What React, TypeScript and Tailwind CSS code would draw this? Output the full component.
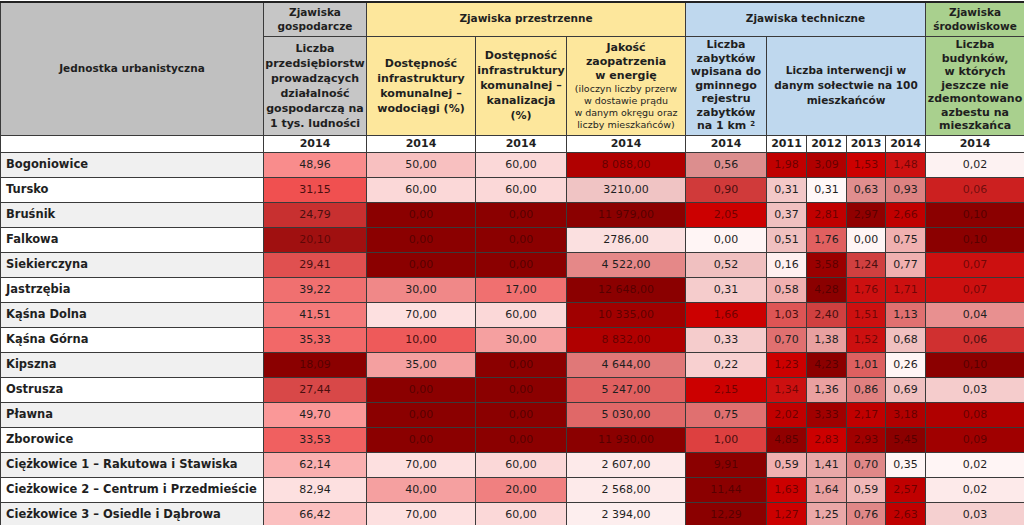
import React from 'react';

type Row = { name: string; cells: [string, string][] };

// heat-map colours read off the screenshot, cell by cell
const rows: Row[] = [
  { name: 'Bogoniowice', cells: [['48,96', '#f98c8c'], ['50,00', '#f8c0c0'], ['60,00', '#fbd8d8'], ['8 088,00', '#b00000'], ['0,56', '#dc8e8e'], ['1,98', '#c00000'], ['3,09', '#b00000'], ['1,53', '#cc0000'], ['1,48', '#cc1010'], ['0,02', '#fdf2f2']] },
  { name: 'Tursko', cells: [['31,15', '#f05050'], ['60,00', '#fbd8d8'], ['60,00', '#fbd8d8'], ['3210,00', '#f0c4c4'], ['0,90', '#d03a3a'], ['0,31', '#f3c8c8'], ['0,31', '#fff8f8'], ['0,63', '#e08e8e'], ['0,93', '#dc8282'], ['0,06', '#cc2020']] },
  { name: 'Bruśnik', cells: [['24,79', '#c83030'], ['0,00', '#8b0000'], ['0,00', '#8b0000'], ['11 979,00', '#8b0000'], ['2,05', '#cc0000'], ['0,37', '#f0c0c0'], ['2,81', '#c00000'], ['2,97', '#900000'], ['2,66', '#c00000'], ['0,10', '#8b0000']] },
  { name: 'Falkowa', cells: [['20,10', '#a01010'], ['0,00', '#8b0000'], ['0,00', '#8b0000'], ['2786,00', '#fbe0e0'], ['0,00', '#fff5f5'], ['0,51', '#f0c0c0'], ['1,76', '#e06060'], ['0,00', '#fff5f5'], ['0,75', '#f0b0b0'], ['0,10', '#8b0000']] },
  { name: 'Siekierczyna', cells: [['29,41', '#e05050'], ['0,00', '#8b0000'], ['0,00', '#8b0000'], ['4 522,00', '#e58888'], ['0,52', '#f0c0c0'], ['0,16', '#fff0f0'], ['3,58', '#9a0000'], ['1,24', '#d04040'], ['0,77', '#f0b0b0'], ['0,07', '#cc1010']] },
  { name: 'Jastrzębia', cells: [['39,22', '#f07070'], ['30,00', '#f08888'], ['17,00', '#f07070'], ['12 648,00', '#8b0000'], ['0,31', '#f5cccc'], ['0,58', '#f0b0b0'], ['4,28', '#8b0000'], ['1,76', '#cc1010'], ['1,71', '#cc1010'], ['0,07', '#cc1010']] },
  { name: 'Kąśna Dolna', cells: [['41,51', '#f47a7a'], ['70,00', '#fde0e0'], ['60,00', '#fbd8d8'], ['10 335,00', '#a00000'], ['1,66', '#cc0000'], ['1,03', '#dd5555'], ['2,40', '#d04040'], ['1,51', '#cc1010'], ['1,13', '#e07070'], ['0,04', '#e89090']] },
  { name: 'Kąśna Górna', cells: [['35,33', '#f26868'], ['10,00', '#ee5a5a'], ['30,00', '#f5a0a0'], ['8 832,00', '#b00000'], ['0,33', '#f5cccc'], ['0,70', '#e07070'], ['1,38', '#e8a0a0'], ['1,52', '#cc1010'], ['0,68', '#f0c0c0'], ['0,06', '#d03030']] },
  { name: 'Kipszna', cells: [['18,09', '#8b0000'], ['35,00', '#f4a0a0'], ['0,00', '#8b0000'], ['4 644,00', '#e07878'], ['0,22', '#f8d0d0'], ['1,23', '#cc0000'], ['4,23', '#8b0000'], ['1,01', '#dd6060'], ['0,26', '#fff5f5'], ['0,10', '#8b0000']] },
  { name: 'Ostrusza', cells: [['27,44', '#d84848'], ['0,00', '#8b0000'], ['0,00', '#8b0000'], ['5 247,00', '#e06060'], ['2,15', '#cc0000'], ['1,34', '#cc1010'], ['1,36', '#eaa0a0'], ['0,86', '#e08080'], ['0,69', '#f0c0c0'], ['0,03', '#f5cccc']] },
  { name: 'Pławna', cells: [['49,70', '#fa9898'], ['0,00', '#8b0000'], ['0,00', '#8b0000'], ['5 030,00', '#e06868'], ['0,75', '#e07070'], ['2,02', '#c00000'], ['3,33', '#a00000'], ['2,17', '#c00000'], ['3,18', '#b00000'], ['0,08', '#b00000']] },
  { name: 'Zborowice', cells: [['33,53', '#f06060'], ['0,00', '#8b0000'], ['0,00', '#8b0000'], ['11 930,00', '#8b0000'], ['1,00', '#dd4040'], ['4,85', '#900000'], ['2,83', '#cc0000'], ['2,93', '#a00000'], ['5,45', '#8b0000'], ['0,09', '#a00000']] },
  { name: 'Ciężkowice 1 – Rakutowa i Stawiska', cells: [['62,14', '#fab0b0'], ['70,00', '#fde0e0'], ['60,00', '#fbd8d8'], ['2 607,00', '#fdeaea'], ['9,91', '#8b0000'], ['0,59', '#f0b0b0'], ['1,41', '#e8a8a8'], ['0,70', '#e08888'], ['0,35', '#fff5f5'], ['0,02', '#fff5f5']] },
  { name: 'Cieżkowice 2 – Centrum i Przedmieście', cells: [['82,94', '#fde0e0'], ['40,00', '#f5a0a0'], ['20,00', '#f08080'], ['2 568,00', '#fdeaea'], ['11,44', '#8b0000'], ['1,63', '#cc0000'], ['1,64', '#e8a0a0'], ['0,59', '#f0b8b8'], ['2,57', '#c00000'], ['0,02', '#fdeaea']] },
  { name: 'Cieżkowice 3 – Osiedle i Dąbrowa', cells: [['66,42', '#fbc0c0'], ['70,00', '#fde0e0'], ['60,00', '#fbd8d8'], ['2 394,00', '#fdeeee'], ['12,29', '#8b0000'], ['1,27', '#cc0000'], ['1,25', '#eaa8a8'], ['0,76', '#e08888'], ['2,63', '#c00000'], ['0,03', '#f5d0d0']] },
];

function textColor(bg: string) {
  const g = parseInt(bg.slice(3, 5), 16);
  if (g < 0x28) return 'rgba(50,0,0,0.6)';
  if (g < 0x60) return '#4a0f0f';
  return '#1f1f1f';
}

const th = 'border border-[#3a3a3a] font-bold text-center align-middle p-0';

export default function App() {
  return (
    <div className="w-[1024px] h-[525px] overflow-hidden bg-white pt-[1px] font-['DejaVu_Sans',sans-serif] text-[11px] text-[#1f1f1f]">
      <table className="table-fixed border-collapse w-[1024px] border-t-2 border-t-[#222]">
        <colgroup>
          <col className="w-[263px]" />
          <col className="w-[103px]" />
          <col className="w-[109px]" />
          <col className="w-[91px]" />
          <col className="w-[119px]" />
          <col className="w-[81px]" />
          <col className="w-[40px]" />
          <col className="w-[40px]" />
          <col className="w-[39px]" />
          <col className="w-[40px]" />
          <col className="w-[99px]" />
        </colgroup>
        <thead>
          <tr className="h-[34px]">
            <th rowSpan={2} className={`${th} bg-[#c0c0c0] text-[10.5px]`}>Jednostka urbanistyczna</th>
            <th className={`${th} bg-[#c6c6c6] leading-[14px] text-[10.5px]`}>Zjawiska<br />gospodarcze</th>
            <th colSpan={3} className={`${th} bg-[#fde79c] text-[10.5px]`}>Zjawiska przestrzenne</th>
            <th colSpan={5} className={`${th} bg-[#bfd8ee] text-[10.5px]`}>Zjawiska techniczne</th>
            <th className={`${th} bg-[#a9d08e] leading-[14px] text-[10.5px]`}>Zjawiska<br />środowiskowe</th>
          </tr>
          <tr className="h-[99px]">
            <th className={`${th} bg-[#c6c6c6] leading-[15px]`}>Liczba<br />przedsiębiorstw<br />prowadzących<br />działalność<br />gospodarczą na<br />1 tys. ludności</th>
            <th className={`${th} bg-[#fde79c] leading-[15px]`}>Dostępność<br />infrastruktury<br />komunalnej –<br />wodociągi (%)</th>
            <th className={`${th} bg-[#fde79c] leading-[15px]`}>Dostępność<br />infrastruktury<br />komunalnej –<br />kanalizacja<br />(%)</th>
            <th className={`${th} bg-[#fde79c] leading-[14px]`}>
              Jakość<br />zaopatrzenia<br />w energię
              <div className="font-normal text-[9.5px] leading-[12px]">(iloczyn liczby przerw<br />w dostawie prądu<br />w danym okręgu oraz<br />liczby mieszkańców)</div>
            </th>
            <th className={`${th} bg-[#bfd8ee] leading-[13.5px]`}>Liczba<br />zabytków<br />wpisana do<br />gminnego<br />rejestru<br />zabytków<br />na 1 km <sup className="text-[7px]">2</sup></th>
            <th colSpan={4} className={`${th} bg-[#bfd8ee] leading-[15px] text-[10.5px]`}>Liczba interwencji w<br />danym sołectwie na 100<br />mieszkańców</th>
            <th className={`${th} bg-[#a9d08e] leading-[13.5px]`}>Liczba<br />budynków,<br />w których<br />jeszcze nie<br />zdemontowano<br />azbestu na<br />mieszkańca</th>
          </tr>
          <tr className="h-[17px]">
            <th className={`${th} bg-white`}></th>
            {['2014', '2014', '2014', '2014', '2014', '2011', '2012', '2013', '2014', '2014'].map((y, i) => (
              <th key={i} className={`${th} bg-white`}>{y}</th>
            ))}
          </tr>
        </thead>
        <tbody>
          {rows.map((r, i) => (
            <tr key={r.name} className="h-[25px]">
              <td className={`border border-[#3a3a3a] pl-[5px] font-bold whitespace-nowrap text-[11.5px] ${i % 2 === 0 ? 'bg-[#f0f0f0]' : 'bg-white'}`}>{r.name}</td>
              {r.cells.map(([v, bg], j) => (
                <td key={j} className="border border-[#3a3a3a] text-center p-0" style={{ backgroundColor: bg, color: textColor(bg) }}>{v}</td>
              ))}
            </tr>
          ))}
        </tbody>
      </table>
    </div>
  );
}
